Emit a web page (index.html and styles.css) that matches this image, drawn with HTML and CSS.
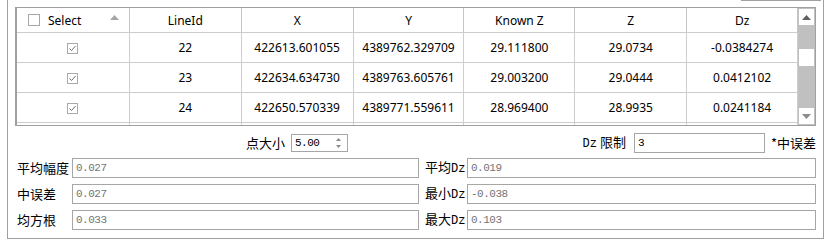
FILE: index.html
```html
<!doctype html>
<html lang="zh-CN">
<head>
    <meta charset="UTF-8">
    <title>精度统计</title>
    <link rel="stylesheet" href="styles.css">
</head>
<body>
    <div class="frame">
        <div class="topbar"></div>

        <div class="gridbox">
            <div class="grid">
                <div class="row head">
                    <div class="cell c1 sel">
                        <span class="chk"></span>
                        <span class="seltxt">Select</span>
                        <svg class="sort" width="9" height="5" viewBox="0 0 9 5"><path d="M0 5 L4.5 0 L9 5 Z" fill="#a6a6a6"/></svg>
                    </div>
                    <div class="cell c2">LineId</div>
                    <div class="cell c3">X</div>
                    <div class="cell c4">Y</div>
                    <div class="cell c5">Known Z</div>
                    <div class="cell c6">Z</div>
                    <div class="cell c7">Dz</div>
                </div>
                <div class="row">
                    <div class="cell c1"><span class="chk on"><svg width="9" height="9" viewBox="0 0 9 9"><path d="M1.5 4.5 L3.5 6.5 L7.5 2" fill="none" stroke="#6e6e6e" stroke-width="1"/></svg></span></div>
                    <div class="cell c2">22</div>
                    <div class="cell c3">422613.601055</div>
                    <div class="cell c4">4389762.329709</div>
                    <div class="cell c5">29.111800</div>
                    <div class="cell c6">29.0734</div>
                    <div class="cell c7">-0.0384274</div>
                </div>
                <div class="row">
                    <div class="cell c1"><span class="chk on"><svg width="9" height="9" viewBox="0 0 9 9"><path d="M1.5 4.5 L3.5 6.5 L7.5 2" fill="none" stroke="#6e6e6e" stroke-width="1"/></svg></span></div>
                    <div class="cell c2">23</div>
                    <div class="cell c3">422634.634730</div>
                    <div class="cell c4">4389763.605761</div>
                    <div class="cell c5">29.003200</div>
                    <div class="cell c6">29.0444</div>
                    <div class="cell c7">0.0412102</div>
                </div>
                <div class="row">
                    <div class="cell c1"><span class="chk on"><svg width="9" height="9" viewBox="0 0 9 9"><path d="M1.5 4.5 L3.5 6.5 L7.5 2" fill="none" stroke="#6e6e6e" stroke-width="1"/></svg></span></div>
                    <div class="cell c2">24</div>
                    <div class="cell c3">422650.570339</div>
                    <div class="cell c4">4389771.559611</div>
                    <div class="cell c5">28.969400</div>
                    <div class="cell c6">28.9935</div>
                    <div class="cell c7">0.0241184</div>
                </div>
                <div class="row">
                    <div class="cell c1"></div>
                    <div class="cell c2"></div>
                    <div class="cell c3"></div>
                    <div class="cell c4"></div>
                    <div class="cell c5"></div>
                    <div class="cell c6"></div>
                    <div class="cell c7"></div>
                </div>
            </div>

            <div class="vscroll">
                <div class="sbtn up"><svg width="9" height="5" viewBox="0 0 9 5"><path d="M0 5 L4.5 0 L9 5 Z" fill="#606060"/></svg></div>
                <div class="track"><div class="thumb"></div></div>
                <div class="sbtn down"><svg width="9" height="5" viewBox="0 0 9 5"><path d="M0 0 L4.5 5 L9 0 Z" fill="#8c8c8c"/></svg></div>
            </div>
        </div>

        <div class="opts">
            <span class="lbl size">点大小</span>
            <div class="spin">
                <span class="val dark">5.00</span>
                <svg class="arrows" width="5" height="10" viewBox="0 0 5 10"><path d="M0 3 L2.5 0 L5 3 Z M0 7 L2.5 10 L5 7 Z" fill="#8a8a8a"/></svg>
            </div>
            <span class="grow"></span>
            <span class="lbl"><span class="en">Dz</span> 限制</span>
            <div class="box limit"><span class="val dark">3</span></div>
            <span class="lbl tail">*中误差</span>
        </div>

        <div class="stats">
            <span class="lbl">平均幅度</span>
            <div class="box"><span class="val">0.027</span></div>
            <span class="lbl rl">平均<span class="en">Dz</span></span>
            <div class="box"><span class="val">0.019</span></div>

            <span class="lbl">中误差</span>
            <div class="box"><span class="val">0.027</span></div>
            <span class="lbl rl">最小<span class="en">Dz</span></span>
            <div class="box"><span class="val">-0.038</span></div>

            <span class="lbl">均方根</span>
            <div class="box"><span class="val">0.033</span></div>
            <span class="lbl rl">最大<span class="en">Dz</span></span>
            <div class="box"><span class="val">0.103</span></div>
        </div>
    </div>
</body>
</html>
```

FILE: styles.css
```css
*{padding: 0; margin: 0; box-sizing: border-box;}
body{background: #fff; font-family: "Noto Sans", "Noto Sans CJK SC", sans-serif; color: #000;}

.frame{width: 817px; height: 239px; margin-left: 7px; border: 1px solid #a0a0a0; border-top: 0; background: #fff;}
.topbar{width: 80px; height: 1px; margin-left: auto; margin-right: 2px; background: #a0a0a0;}

/* table */
.gridbox{display: flex; width: 801px; height: 119px; margin: 6px 0 0 7px; border: 1px solid #a0a0a0; border-left-width: 2px;}
.grid{width: 782px; overflow: hidden;}
.row{display: flex; height: 30px; border-bottom: 1px solid #cdcdcd; font-size: 12px;}
.row.head{height: 25px;}
.cell{display: flex; align-items: center; justify-content: center; border-right: 1px solid #cdcdcd; white-space: nowrap; overflow: hidden;}
.head .cell{border-right-color: #c4c4c4;}
.c1{width: 113px;}
.c2, .c3, .c6{width: 112px;}
.c4, .c5, .c7{width: 111px;}

.chk{display: inline-block; width: 12px; height: 12px; border: 1px solid #a8a8a8; background: #fff;}
.chk.on{width: 11px; height: 11px; border-color: #aaaaaa; position: relative; top: 1px;}
.chk.on svg{display: block; margin: 0;}
.sel{justify-content: flex-start; padding-left: 11px;}
.seltxt{margin-left: 8px;}
.sort{margin-left: 29px; margin-top: -6px;}

.vscroll{width: 17px; display: flex; flex-direction: column; background: #c0c0c0;}
.sbtn{height: 16px; margin: 1px 1px 0; background: #fff; display: flex; align-items: center; justify-content: center;}
.sbtn.down{margin: 0 1px 1px;}
.track{flex: 1;}
.thumb{height: 17px; margin: 24px 1px 0; background: #fff;}

/* options */
.lbl{font-family: "Noto Sans CJK SC", sans-serif; font-size: 13px; line-height: 18px; white-space: nowrap;}
.en{font-family: "Liberation Mono", monospace; font-size: 12px;}
.opts{display: flex; align-items: center; width: 800px; height: 18px; margin: 8px 0 0 8px;}
.size{margin-left: 230px;}
.spin{width: 57px; height: 18px; margin-left: 6px; border: 1px solid #a6a6a6; display: flex; align-items: center; padding-left: 3px;}
.arrows{margin-left: auto; margin-right: 6px;}
.grow{flex: 1;}
.limit{width: 131px; height: 18px; margin-left: 8px;}
.tail{margin-left: 6px;}

.box{border: 1px solid #a6a6a6; display: flex; align-items: center; padding-left: 3px; height: 20px;}
.val{font-family: "Liberation Mono", monospace; font-size: 11px; letter-spacing: -0.5px; color: #747474;}
.val.dark{color: #000;}

.stats{display: grid; grid-template-columns: 56px 347px 48px 349px; row-gap: 6px; width: 800px; margin: 6px 0 0 8px; align-items: center;}
.stats .lbl{padding-left: 1px;}
.stats .rl{padding-left: 6px;}
```
